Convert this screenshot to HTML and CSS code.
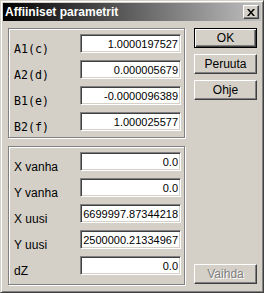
FILE: index.html
```html
<!DOCTYPE html>
<html lang="fi">
  <head>
    <meta charset="UTF-8" />
    <meta name="viewport" content="width=device-width, initial-scale=1.0" />
    <title>Affiiniset parametrit</title>
    <link rel="stylesheet" href="styles.css">
  </head>

  <body>
    <div class="ikkuna">
      <header class="otsikko">
        <h1>Affiiniset parametrit</h1>
        <button class="sulje" title="Sulje">
          <svg width="8" height="7" viewBox="0 0 8 7">
            <path d="M0 0h2l2 2.5 2-2.5h2L5 3.5 8 7H6L4 4.5 2 7H0l3-3.5z" fill="#000" />
          </svg>
        </button>
      </header>

      <div class="sisalto">
        <div class="vasen">
          <fieldset class="ryhma ryhma1">
            <label class="mono">A1(c)</label>
            <input type="text" value="1.0000197527" />
            <label class="mono">A2(d)</label>
            <input type="text" value="0.000005679" />
            <label class="mono">B1(e)</label>
            <input type="text" value="-0.0000096389" />
            <label class="mono">B2(f)</label>
            <input type="text" value="1.000025577" />
          </fieldset>

          <fieldset class="ryhma ryhma2">
            <label>X vanha</label>
            <input type="text" value="0.0" />
            <label>Y vanha</label>
            <input type="text" value="0.0" />
            <label>X uusi</label>
            <input type="text" value="6699997.87344218" />
            <label>Y uusi</label>
            <input type="text" value="2500000.21334967" />
            <label>dZ</label>
            <input type="text" value="0.0" />
          </fieldset>
        </div>

        <div class="oikea">
          <button class="knap oletus">OK</button>
          <button class="knap">Peruuta</button>
          <button class="knap">Ohje</button>
          <button class="knap vaihda" disabled>Vaihda</button>
        </div>
      </div>
    </div>
  </body>
</html>
```

FILE: styles.css
```css
* {
  box-sizing: border-box;
}

body {
  margin: 0;
  font-family: "Liberation Sans", Arial, sans-serif;
  font-size: 11px;
  color: #000;
}

.ikkuna {
  width: 264px;
  height: 293px;
  background-color: #d4d0c8;
  border: 1px solid;
  border-color: #d4d0c8 #404040 #404040 #d4d0c8;
  box-shadow: inset 1px 1px #fff, inset -1px -1px #808080;
  padding: 2px;
  display: flex;
  flex-direction: column;
}

/* titlebar */
.otsikko {
  height: 18px;
  background: linear-gradient(to right, #000, #c0c0c0);
  display: flex;
  align-items: center;
  justify-content: space-between;
  padding: 0 2px 0 2px;
}

.otsikko h1 {
  margin: 0;
  color: #fff;
  font-size: 12px;
  font-weight: bold;
  line-height: 18px;
}

.sulje {
  width: 16px;
  height: 14px;
  padding: 0;
  margin: 0;
  background-color: #d4d0c8;
  border: 1px solid;
  border-color: #fff #404040 #404040 #fff;
  box-shadow: inset -1px -1px #808080;
  display: flex;
  align-items: center;
  justify-content: center;
}

.sisalto {
  flex: 1;
  display: flex;
}

.vasen {
  padding: 7px 0 0 5px;
  display: flex;
  flex-direction: column;
  gap: 8px;
}

/* etched group box */
.ryhma {
  margin: 0;
  width: 177px;
  border: 1px solid #808080;
  box-shadow: inset 1px 1px #fff, 1px 1px #fff;
  padding: 5px 0 0 5px;
  display: grid;
  grid-template-columns: 66px 101px;
  grid-auto-rows: 19px;
  row-gap: 7px;
  align-content: start;
}

.ryhma1 {
  height: 110px;
}

.ryhma2 {
  height: 139px;
}

.ryhma label {
  align-self: end;
  font-size: 12px;
  line-height: 14px;
  margin-bottom: -3px;
  white-space: nowrap;
}

.ryhma label.mono {
  font-family: "DejaVu Sans Mono", monospace;
  font-size: 11.6px;
}

.ryhma input {
  width: 101px;
  height: 19px;
  margin: 0;
  padding: 1px 2px 0 0;
  font-family: "Liberation Sans", Arial, sans-serif;
  font-size: 11px;
  color: #000;
  text-align: right;
  background-color: #fff;
  border: 1px solid;
  border-color: #808080 #fff #fff #808080;
  box-shadow: inset 1px 1px #404040, inset -1px -1px #d4d0c8;
  outline: none;
}

.oikea {
  margin-left: 9px;
  padding: 7px 0 6px 0;
  display: flex;
  flex-direction: column;
  gap: 6px;
}

.knap {
  width: 63px;
  height: 20px;
  margin: 0;
  padding: 0;
  font-family: "Liberation Sans", Arial, sans-serif;
  font-size: 12px;
  color: #000;
  background-color: #d4d0c8;
  border: 1px solid;
  border-color: #fff #404040 #404040 #fff;
  box-shadow: inset -1px -1px #808080;
}

.oletus {
  border-color: #000;
  box-shadow: inset 1px 1px #fff, inset -1px -1px #404040, inset -2px -2px #808080;
}

.vaihda {
  margin-top: auto;
  color: #808080;
  text-shadow: 1px 1px #fff;
}
```
